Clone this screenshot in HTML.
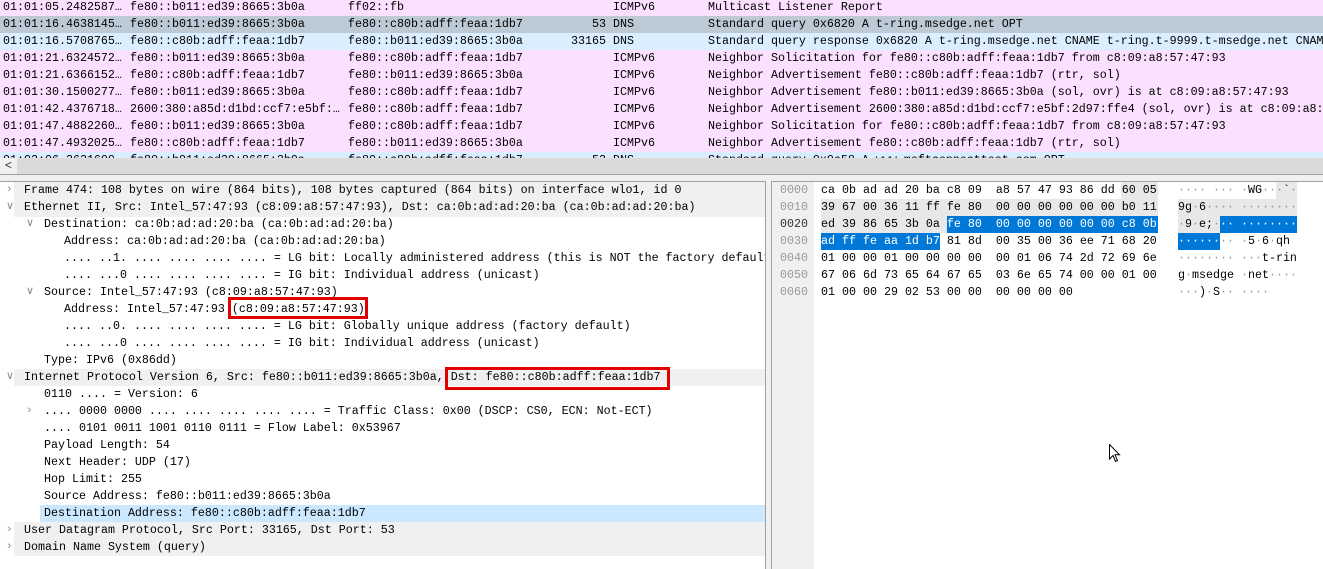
<!DOCTYPE html>
<html><head><meta charset="utf-8"><style>
body{margin:0;width:1323px;height:568px;overflow:hidden;background:#f0f0f0;font-family:"Liberation Mono",monospace;font-size:11.67px;color:#000;position:relative}
.r{position:absolute;left:0;width:1323px;height:17px;line-height:17px;white-space:pre}
.r span{position:absolute;top:0}
.p{background:#fce0ff}.b{background:#daeeff}.s{background:#bccad6}
.d{position:absolute;height:17px;line-height:17px;white-space:pre}
.a{position:absolute;color:#888;font-size:11px;line-height:17px}
.h{position:absolute;height:17px;line-height:17px;white-space:pre}
.box{position:absolute;border:3px solid #e00000;box-sizing:border-box}
</style></head><body>
<div style="position:absolute;left:0;top:0;width:1323px;height:158px;background:#fff;overflow:hidden">
<div class="r p" style="top:-1px"><span style="left:3px">01:01:05.2482587…</span><span style="left:130px">fe80::b011:ed39:8665:3b0a</span><span style="left:348px">ff02::fb</span><span style="left:613px">ICMPv6</span><span style="left:708px">Multicast Listener Report</span></div>
<div class="r s" style="top:16px"><span style="left:3px">01:01:16.4638145…</span><span style="left:130px">fe80::b011:ed39:8665:3b0a</span><span style="left:348px">fe80::c80b:adff:feaa:1db7</span><span style="left:592px">53</span><span style="left:613px">DNS</span><span style="left:708px">Standard query 0x6820 A t-ring.msedge.net OPT</span></div>
<div class="r b" style="top:33px"><span style="left:3px">01:01:16.5708765…</span><span style="left:130px">fe80::c80b:adff:feaa:1db7</span><span style="left:348px">fe80::b011:ed39:8665:3b0a</span><span style="left:571px">33165</span><span style="left:613px">DNS</span><span style="left:708px">Standard query response 0x6820 A t-ring.msedge.net CNAME t-ring.t-9999.t-msedge.net CNAME</span></div>
<div class="r p" style="top:50px"><span style="left:3px">01:01:21.6324572…</span><span style="left:130px">fe80::b011:ed39:8665:3b0a</span><span style="left:348px">fe80::c80b:adff:feaa:1db7</span><span style="left:613px">ICMPv6</span><span style="left:708px">Neighbor Solicitation for fe80::c80b:adff:feaa:1db7 from c8:09:a8:57:47:93</span></div>
<div class="r p" style="top:67px"><span style="left:3px">01:01:21.6366152…</span><span style="left:130px">fe80::c80b:adff:feaa:1db7</span><span style="left:348px">fe80::b011:ed39:8665:3b0a</span><span style="left:613px">ICMPv6</span><span style="left:708px">Neighbor Advertisement fe80::c80b:adff:feaa:1db7 (rtr, sol)</span></div>
<div class="r p" style="top:84px"><span style="left:3px">01:01:30.1500277…</span><span style="left:130px">fe80::b011:ed39:8665:3b0a</span><span style="left:348px">fe80::c80b:adff:feaa:1db7</span><span style="left:613px">ICMPv6</span><span style="left:708px">Neighbor Advertisement fe80::b011:ed39:8665:3b0a (sol, ovr) is at c8:09:a8:57:47:93</span></div>
<div class="r p" style="top:101px"><span style="left:3px">01:01:42.4376718…</span><span style="left:130px">2600:380:a85d:d1bd:ccf7:e5bf:…</span><span style="left:348px">fe80::c80b:adff:feaa:1db7</span><span style="left:613px">ICMPv6</span><span style="left:708px">Neighbor Advertisement 2600:380:a85d:d1bd:ccf7:e5bf:2d97:ffe4 (sol, ovr) is at c8:09:a8:57:47:93</span></div>
<div class="r p" style="top:118px"><span style="left:3px">01:01:47.4882260…</span><span style="left:130px">fe80::b011:ed39:8665:3b0a</span><span style="left:348px">fe80::c80b:adff:feaa:1db7</span><span style="left:613px">ICMPv6</span><span style="left:708px">Neighbor Solicitation for fe80::c80b:adff:feaa:1db7 from c8:09:a8:57:47:93</span></div>
<div class="r p" style="top:135px"><span style="left:3px">01:01:47.4932025…</span><span style="left:130px">fe80::c80b:adff:feaa:1db7</span><span style="left:348px">fe80::b011:ed39:8665:3b0a</span><span style="left:613px">ICMPv6</span><span style="left:708px">Neighbor Advertisement fe80::c80b:adff:feaa:1db7 (rtr, sol)</span></div>
<div class="r b" style="top:152px"><span style="left:3px">01:02:06.3621600…</span><span style="left:130px">fe80::b011:ed39:8665:3b0a</span><span style="left:348px">fe80::c80b:adff:feaa:1db7</span><span style="left:592px">53</span><span style="left:613px">DNS</span><span style="left:708px">Standard query 0x0c58 A www.msftconnecttest.com OPT</span></div>
</div>
<div style="position:absolute;left:0;top:158px;width:1323px;height:16px;background:#dadada;border-bottom:1px solid #a0a0a0"></div>
<div style="position:absolute;left:0;top:158px;width:17px;height:16px;background:#f0f0f0;color:#333;font-size:12px;line-height:16px;text-align:center">&lt;</div>
<div style="position:absolute;left:0;top:181px;width:765px;height:387px;background:#fff;border-top:1px solid #a0a0a0;border-right:1px solid #a0a0a0;overflow:hidden">
<div style="position:absolute;left:14px;top:0;width:751px;height:35px;background:#f0f0f0"></div>
<div style="position:absolute;left:14px;top:187px;width:751px;height:17px;background:#f0f0f0"></div>
<div style="position:absolute;left:14px;top:340px;width:751px;height:34px;background:#f0f0f0"></div>
<div style="position:absolute;left:40px;top:323px;width:725px;height:17px;background:#cce8ff"></div>
<div class="a" style="left:6px;top:0">&#x203A;</div><div class="d" style="left:24px;top:0">Frame 474: 108 bytes on wire (864 bits), 108 bytes captured (864 bits) on interface wlo1, id 0</div>
<div class="a" style="left:6px;top:17px">&#x2228;</div><div class="d" style="left:24px;top:17px">Ethernet II, Src: Intel_57:47:93 (c8:09:a8:57:47:93), Dst: ca:0b:ad:ad:20:ba (ca:0b:ad:ad:20:ba)</div>
<div class="a" style="left:26px;top:34px">&#x2228;</div><div class="d" style="left:44px;top:34px">Destination: ca:0b:ad:ad:20:ba (ca:0b:ad:ad:20:ba)</div>
<div class="d" style="left:64px;top:51px">Address: ca:0b:ad:ad:20:ba (ca:0b:ad:ad:20:ba)</div>
<div class="d" style="left:64px;top:68px">.... ..1. .... .... .... .... = LG bit: Locally administered address (this is NOT the factory default)</div>
<div class="d" style="left:64px;top:85px">.... ...0 .... .... .... .... = IG bit: Individual address (unicast)</div>
<div class="a" style="left:26px;top:102px">&#x2228;</div><div class="d" style="left:44px;top:102px">Source: Intel_57:47:93 (c8:09:a8:57:47:93)</div>
<div class="d" style="left:64px;top:119px">Address: Intel_57:47:93 (c8:09:a8:57:47:93)</div>
<div class="d" style="left:64px;top:136px">.... ..0. .... .... .... .... = LG bit: Globally unique address (factory default)</div>
<div class="d" style="left:64px;top:153px">.... ...0 .... .... .... .... = IG bit: Individual address (unicast)</div>
<div class="d" style="left:44px;top:170px">Type: IPv6 (0x86dd)</div>
<div class="a" style="left:6px;top:187px">&#x2228;</div><div class="d" style="left:24px;top:187px">Internet Protocol Version 6, Src: fe80::b011:ed39:8665:3b0a, Dst: fe80::c80b:adff:feaa:1db7</div>
<div class="d" style="left:44px;top:204px">0110 .... = Version: 6</div>
<div class="a" style="left:26px;top:221px">&#x203A;</div><div class="d" style="left:44px;top:221px">.... 0000 0000 .... .... .... .... .... = Traffic Class: 0x00 (DSCP: CS0, ECN: Not-ECT)</div>
<div class="d" style="left:44px;top:238px">.... 0101 0011 1001 0110 0111 = Flow Label: 0x53967</div>
<div class="d" style="left:44px;top:255px">Payload Length: 54</div>
<div class="d" style="left:44px;top:272px">Next Header: UDP (17)</div>
<div class="d" style="left:44px;top:289px">Hop Limit: 255</div>
<div class="d" style="left:44px;top:306px">Source Address: fe80::b011:ed39:8665:3b0a</div>
<div class="d" style="left:44px;top:323px">Destination Address: fe80::c80b:adff:feaa:1db7</div>
<div class="a" style="left:6px;top:340px">&#x203A;</div><div class="d" style="left:24px;top:340px">User Datagram Protocol, Src Port: 33165, Dst Port: 53</div>
<div class="a" style="left:6px;top:357px">&#x203A;</div><div class="d" style="left:24px;top:357px">Domain Name System (query)</div>
</div>
<div class="box" style="left:228px;top:297px;width:140px;height:22px"></div>
<div class="box" style="left:445px;top:367px;width:225px;height:23px"></div>
<div style="position:absolute;left:771px;top:181px;width:552px;height:387px;background:#fff;border-top:1px solid #a0a0a0;border-left:1px solid #a0a0a0;overflow:hidden">
<div style="position:absolute;left:0;top:0;width:42px;height:387px;background:#f0f0f0"></div>
<div style="position:absolute;left:0;top:0;width:42px;line-height:17px;padding-left:8px;color:#999;white-space:pre">0000
0010
<span style="color:#333">0020</span>
0030
0040
0050
0060</div>
<div style="position:absolute;left:349px;top:0;width:37px;height:17px;background:#e8e8e8"></div>
<div style="position:absolute;left:49px;top:17px;width:337px;height:17px;background:#e8e8e8"></div>
<div style="position:absolute;left:49px;top:34px;width:126px;height:17px;background:#e8e8e8"></div>
<div style="position:absolute;left:175px;top:34px;width:211px;height:17px;background:#0078d7"></div>
<div style="position:absolute;left:49px;top:51px;width:119px;height:17px;background:#0078d7"></div>
<div style="position:absolute;left:504px;top:0;width:21px;height:17px;background:#e8e8e8"></div>
<div style="position:absolute;left:406px;top:17px;width:119px;height:17px;background:#e8e8e8"></div>
<div style="position:absolute;left:406px;top:34px;width:42px;height:17px;background:#e8e8e8"></div>
<div style="position:absolute;left:448px;top:34px;width:77px;height:17px;background:#0078d7"></div>
<div style="position:absolute;left:406px;top:51px;width:42px;height:17px;background:#0078d7"></div>
<div class="h" style="left:49px;top:0">ca 0b ad ad 20 ba c8 09  a8 57 47 93 86 dd 60 05</div>
<div class="h" style="left:49px;top:17px">39 67 00 36 11 ff fe 80  00 00 00 00 00 00 b0 11</div>
<div class="h" style="left:49px;top:34px">ed 39 86 65 3b 0a <span style="color:#fff">fe 80  00 00 00 00 00 00 c8 0b</span></div>
<div class="h" style="left:49px;top:51px"><span style="color:#fff">ad ff fe aa 1d b7</span> 81 8d  00 35 00 36 ee 71 68 20</div>
<div class="h" style="left:49px;top:68px">01 00 00 01 00 00 00 00  00 01 06 74 2d 72 69 6e</div>
<div class="h" style="left:49px;top:85px">67 06 6d 73 65 64 67 65  03 6e 65 74 00 00 01 00</div>
<div class="h" style="left:49px;top:102px">01 00 00 29 02 53 00 00  00 00 00 00</div>
<div class="h" style="left:406px;top:0"><span style="color:#999">···· ···</span> <span style="color:#999">·</span>WG<span style="color:#999">···</span>`<span style="color:#999">·</span></div>
<div class="h" style="left:406px;top:17px">9g<span style="color:#999">·</span>6<span style="color:#999">···· ········</span></div>
<div class="h" style="left:406px;top:34px"><span style="color:#999">·</span>9<span style="color:#999">·</span>e;<span style="color:#999">·</span><span style="color:#fff">·· ········</span></div>
<div class="h" style="left:406px;top:51px"><span style="color:#fff">······</span><span style="color:#999">··</span> <span style="color:#999">·</span>5<span style="color:#999">·</span>6<span style="color:#999">·</span>qh</div>
<div class="h" style="left:406px;top:68px"><span style="color:#999">········ ···</span>t-rin</div>
<div class="h" style="left:406px;top:85px">g<span style="color:#999">·</span>msedge <span style="color:#999">·</span>net<span style="color:#999">····</span></div>
<div class="h" style="left:406px;top:102px"><span style="color:#999">···</span>)<span style="color:#999">·</span>S<span style="color:#999">·· ····</span></div>
</div>
<svg style="position:absolute;left:1109px;top:444px" width="12" height="19" viewBox="0 0 12 19"><path d="M0.5 0.5 L0.5 15 L4 11.5 L6.5 17.5 L8.5 16.5 L6 10.8 L10.5 10.8 Z" fill="#fff" stroke="#000" stroke-width="1"/></svg>
</body></html>
